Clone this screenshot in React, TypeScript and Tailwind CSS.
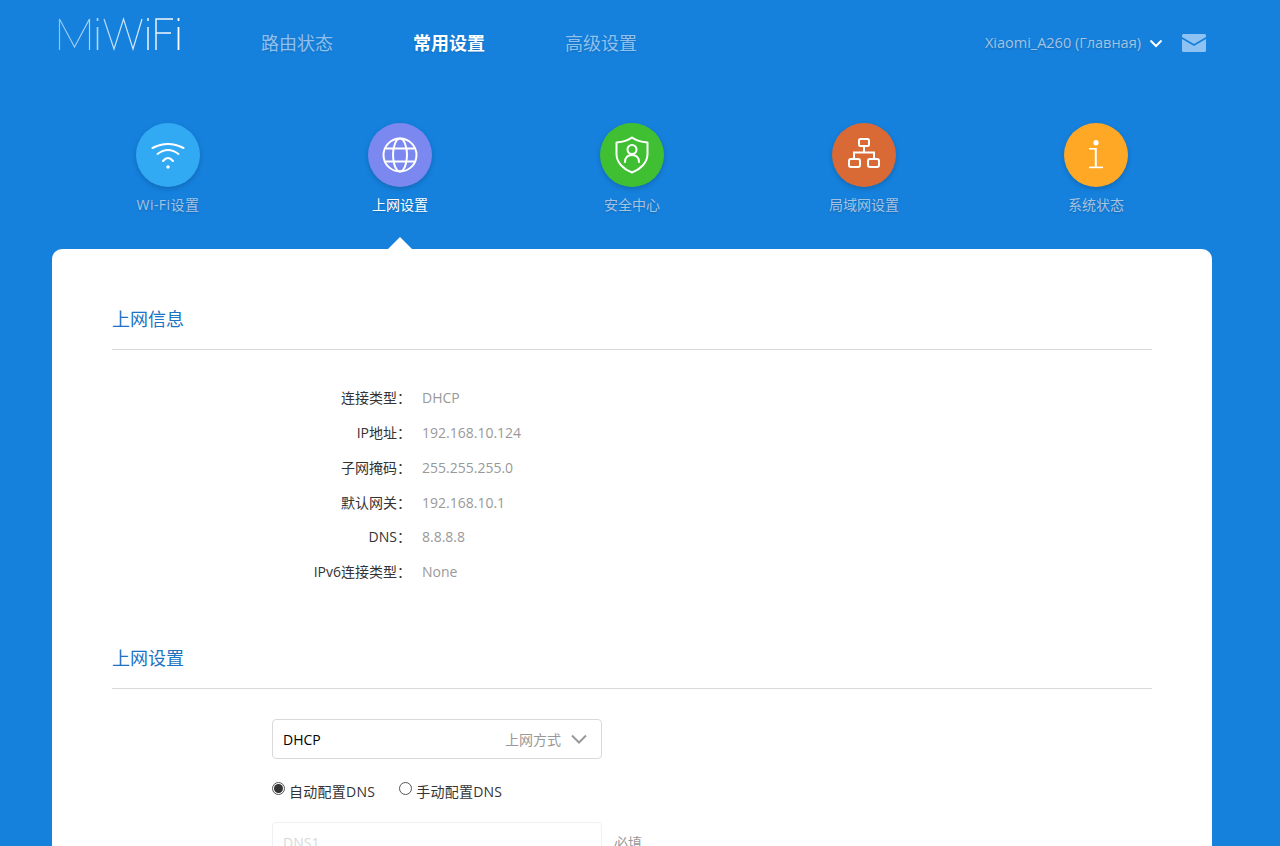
const fontStack = "font-['Open_Sans','Noto_Sans_CJK_SC',sans-serif]";

function Logo() {
  return (
    <svg width="124" height="34" viewBox="0 0 124 34" fill="none" className="block">
      <defs>
        <linearGradient id="logoFade" x1="0" y1="0" x2="124" y2="0" gradientUnits="userSpaceOnUse">
          <stop offset="0" stopColor="#8cc4f2" />
          <stop offset="1" stopColor="#ffffff" />
        </linearGradient>
      </defs>
      <g stroke="url(#logoFade)" strokeWidth="1.2">
        <path d="M1.5 33V2L16.5 30L31.5 2V33" />
        <path d="M39.5 10V33" strokeWidth="1.6" />
        <path d="M39.5 1V4" strokeWidth="1.6" />
        <path d="M46 2L56 32L65.5 2L75 32L84 2" />
        <path d="M90 10V33" strokeWidth="1.6" />
        <path d="M90 1V4" strokeWidth="1.6" />
        <path d="M98 33V2H115M98 16H113" strokeWidth="1.5" />
        <path d="M120.5 10V33" strokeWidth="1.8" />
        <path d="M120.5 1V4" strokeWidth="1.8" />
      </g>
    </svg>
  );
}

function WifiIcon() {
  return (
    <svg width="36" height="36" viewBox="0 0 36 36" fill="none" stroke="white" strokeWidth="2" strokeLinecap="round">
      <path d="M2.5 11Q18 3 33.5 11" />
      <path d="M7.5 17Q18 9 28.5 17" />
      <path d="M13 24Q18 18 23 24" />
      <circle cx="18" cy="30" r="1.7" fill="white" stroke="none" />
    </svg>
  );
}

function GlobeIcon() {
  return (
    <svg width="36" height="36" viewBox="0 0 36 36" fill="none" stroke="white" strokeWidth="2">
      <circle cx="18" cy="18" r="16.5" />
      <ellipse cx="18" cy="18" rx="7" ry="16.5" />
      <path d="M3.5 11.5H32.5M3.5 24.5H32.5" />
    </svg>
  );
}

function ShieldIcon() {
  return (
    <svg width="34" height="38" viewBox="0 0 34 38" fill="none" stroke="white" strokeWidth="2" strokeLinejoin="round" strokeLinecap="round">
      <path d="M17 1.5C21 4.5 26 6 32.5 6.5V18C32.5 27 25 33.5 17 36.5C9 33.5 1.5 27 1.5 18V6.5C8 6 13 4.5 17 1.5Z" />
      <circle cx="17" cy="13.5" r="4.5" />
      <path d="M10 26C10 21.5 13 19 17 19C21 19 24 21.5 24 26" />
    </svg>
  );
}

function LanIcon() {
  return (
    <svg width="32" height="30" viewBox="0 0 32 30" fill="none" stroke="white" strokeWidth="2" className="-mt-[4px]">
      <rect x="11" y="1" width="10" height="7" rx="1.5" />
      <path d="M16 8V14.5M6 21V14.5H26V21" />
      <rect x="1" y="21" width="11" height="8" rx="2" />
      <rect x="20" y="21" width="11" height="8" rx="2" />
    </svg>
  );
}

function InfoIcon() {
  return (
    <svg width="16" height="32" viewBox="0 0 16 32" fill="white">
      <circle cx="8" cy="3.7" r="2.6" />
      <rect x="6.8" y="9" width="2" height="20" />
      <rect x="1" y="9" width="7" height="1.6" />
      <rect x="1" y="27.6" width="14" height="1.6" />
    </svg>
  );
}

const navItems = [
  { label: "Wi-Fi设置", circle: "bg-[#32a9f3]", icon: <WifiIcon />, labelClass: "tracking-[0.45px] text-[#a3c3e4]" },
  { label: "上网设置", circle: "bg-[#7a88f0]", icon: <GlobeIcon />, labelClass: "text-white", active: true },
  { label: "安全中心", circle: "bg-[#41bf32]", icon: <ShieldIcon />, labelClass: "text-[#a3c3e4]" },
  { label: "局域网设置", circle: "bg-[#d96a35]", icon: <LanIcon />, labelClass: "text-[#a3c3e4]" },
  { label: "系统状态", circle: "bg-[#fea826]", icon: <InfoIcon />, labelClass: "text-[#a3c3e4]" },
];

const infoRows = [
  ["连接类型：", "DHCP"],
  ["IP地址：", "192.168.10.124"],
  ["子网掩码：", "255.255.255.0"],
  ["默认网关：", "192.168.10.1"],
  ["DNS：", "8.8.8.8"],
  ["IPv6连接类型：", "None"],
];

function SectionTitle({ children }: { children: string }) {
  return (
    <div className="h-[43px] border-b border-[#d9d9d9] text-[18px] leading-[24px] text-[#1a73c3]">
      {children}
    </div>
  );
}

export default function App() {
  return (
    <div className={`${fontStack} h-[846px] overflow-hidden bg-[#1581dd]`}>
      <header className="flex h-[85px] items-start px-[58px]">
        <div className="mt-[17px] w-[203px] shrink-0">
          <Logo />
        </div>
        <nav className="mt-[30px] flex gap-[80px] text-[18px] leading-[26px] text-[#8fc1ee] [text-shadow:0_1px_2px_rgba(0,0,0,0.15)]">
          <span>路由状态</span>
          <span className="font-bold text-white">常用设置</span>
          <span>高级设置</span>
        </nav>
        <div className="ml-auto mr-[16px] mt-[33px] flex items-center text-[14.5px] leading-[20px] text-[#a3c3e4] [text-shadow:0_1px_2px_rgba(0,0,0,0.2)]">
          <span>Xiaomi_A260 (Главная)</span>
          <svg width="14" height="9" viewBox="0 0 14 9" fill="none" stroke="white" strokeWidth="2" className="ml-[8px] mt-[1px]">
            <path d="M1.5 1.5L7 7L12.5 1.5" />
          </svg>
          <svg width="24" height="18" viewBox="0 0 24 18" className="ml-[19px]">
            <path fill="#8dc2f2" d="M1.5 0H22.5C23.3 0 24 .7 24 1.5V3L12 10L0 3V1.5C0 .7 .7 0 1.5 0Z" />
            <path fill="#8dc2f2" d="M0 5L12 12L24 5V16.5C24 17.3 23.3 18 22.5 18H1.5C.7 18 0 17.3 0 16.5Z" />
          </svg>
        </div>
      </header>

      <div className="mx-[52px] w-[1160px]">
        <div className="grid h-[164px] grid-cols-5 pt-[38px]">
          {navItems.map((item) => (
            <div key={item.label} className="relative flex flex-col items-center">
              <div className={`flex h-[64px] w-[64px] items-center justify-center rounded-full shadow-[0_2px_5px_rgba(0,0,0,0.18)] ${item.circle}`}>
                {item.icon}
              </div>
              <span className={`mt-[8px] text-[14px] leading-[20px] [text-shadow:0_1px_2px_rgba(0,0,0,0.2)] ${item.labelClass}`}>
                {item.label}
              </span>
              {item.active && (
                <div className="absolute bottom-0 h-0 w-0 border-x-[12px] border-b-[12px] border-x-transparent border-b-white" />
              )}
            </div>
          ))}
        </div>

        <main className="h-[700px] rounded-[10px] bg-white px-[60px] pt-[58px]">
          <SectionTitle>上网信息</SectionTitle>
          <div className="pt-[31.3px] text-[14px] leading-[34.75px]">
            {infoRows.map(([label, value]) => (
              <div key={label} className="flex">
                <span className="w-[299px] text-right text-[#333]">{label}</span>
                <span className="ml-[11px] text-[#999]">{value}</span>
              </div>
            ))}
          </div>

          <div className="mt-[56.4px]">
            <SectionTitle>上网设置</SectionTitle>
          </div>

          <div className="ml-[160px] pt-[30px]">
            <div className="flex h-[40px] w-[330px] items-center rounded-[4px] border border-[#d9d9d9] pl-[10px] pr-[14px]">
              <span className="text-[14px] text-black">DHCP</span>
              <span className="ml-auto text-[14px] text-[#999]">上网方式</span>
              <svg width="16" height="10" viewBox="0 0 16 10" fill="none" stroke="#999" strokeWidth="2" className="ml-[10px]">
                <path d="M1 1.5L8 8.5L15 1.5" />
              </svg>
            </div>

            <div className="mt-[21px] flex h-[22px] items-center text-[14px] tracking-[0.25px] text-[#333]">
              <label className="flex items-center">
                <span className="-mt-[5px] flex h-[13px] w-[13px] items-center justify-center rounded-full border border-[#555]">
                  <span className="h-[9px] w-[9px] rounded-full bg-[#333]" />
                </span>
                <span className="ml-[4px]">自动配置DNS</span>
              </label>
              <label className="ml-[24px] flex items-center">
                <span className="-mt-[5px] h-[13px] w-[13px] rounded-full border border-[#555]" />
                <span className="ml-[4px]">手动配置DNS</span>
              </label>
            </div>

            <div className="mt-[20px] flex items-start">
              <div className="flex h-[40px] w-[330px] items-center rounded-[4px] border border-[#f0f0f0] pl-[10px] text-[14px] text-[#d9d9d9]">
                DNS1
              </div>
              <span className="ml-[12px] mt-[10px] text-[14px] text-[#999]">必填</span>
            </div>
          </div>
        </main>
      </div>
    </div>
  );
}
